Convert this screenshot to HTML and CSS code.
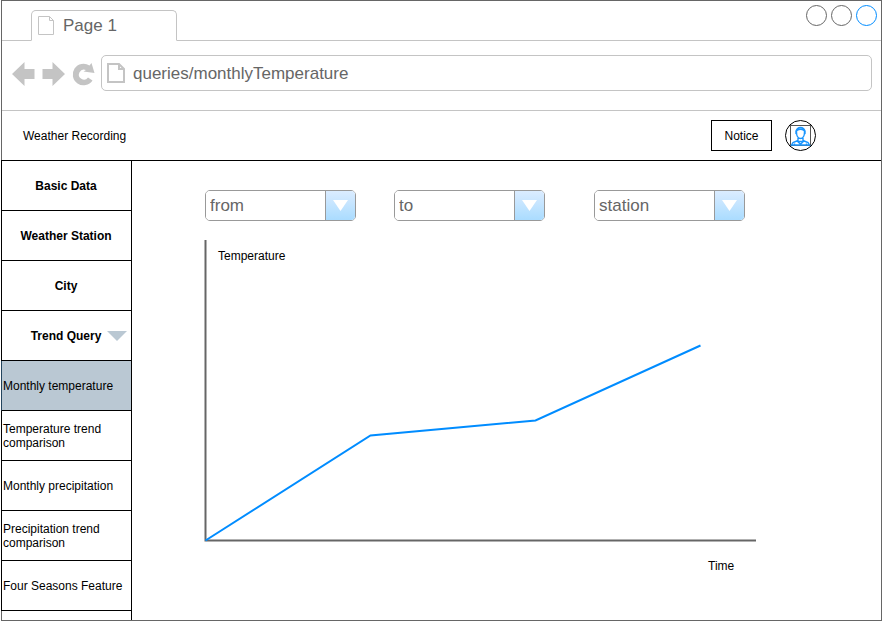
FILE: index.html
```html
<!DOCTYPE html>
<html lang="en">
<head>
<meta charset="utf-8">
<meta name="viewport" content="width=device-width, initial-scale=1">
<title>Weather Recording</title>
<link rel="stylesheet" href="styles.css">
</head>
<body>
<div class="window">
  <div class="tabbar">
    <div class="tab">
      <svg class="tab-icon" width="17" height="20" viewBox="0 0 17 20"><path d="M.5 .5H11.500L15.500 4.500V18.500H.5ZM11.500 .5V4.500H15.500"/></svg>
      <span>Page 1</span>
    </div>
    <div class="dots">
      <span class="dot"></span><span class="dot"></span><span class="dot dot-active"></span>
    </div>
  </div>
  <div class="toolbar">
    <button class="nav" type="button" aria-label="Back"><svg width="23" height="24" viewBox="0 0 23 24"><path d="M0 12L12.500 0V7H22.500V17H12.500V24Z"/></svg></button>
    <button class="nav" type="button" aria-label="Forward"><svg width="23" height="24" viewBox="0 0 23 24"><path d="M23 12L10.500 0V7H.5V17H10.500V24Z"/></svg></button>
    <button class="nav" type="button" aria-label="Reload"><svg class="reload" width="22" height="24" viewBox="0 0 22 24"><path d="M17.500 3.500L19.500 1L22.500 11L11.500 9.500L14 8A5 5 0 1 0 16 15.500L20.500 18.500A10.800 10.800 0 1 1 17.500 3.500Z"/></svg></button>
    <div class="address">
      <svg class="page-icon" width="18" height="20" viewBox="0 0 18 20"><path d="M1 1H12L17 6V19H1ZM12 1V6H17"/></svg>
      <input type="text" aria-label="Address" value="queries/monthlyTemperature">
    </div>
  </div>
  <header class="header">
    <span>Weather Recording</span>
    <div class="header-actions">
      <button class="notice" type="button">Notice</button>
      <button class="avatar" type="button" aria-label="Account">
        <svg width="31" height="31" viewBox="0 0 31 31">
          <circle class="ring" cx="15.500" cy="15.500" r="15"/>
          <rect class="frame" x="5.500" y="5.500" width="20" height="20"/>
          <path class="person" d="M11.500 12C11 6 20 6 19.500 12C19.500 15.500 18 18.500 15.500 18.500S11.500 15.500 11.500 12ZM11 14C9 5.500 22 5.500 20 14M12 10.500C14 9 17 9 19 10.500M13 18V21.500H18V18M13 20.500L8 22.500L6.500 25H24.500L23 22.500L18 20.500M9.500 25V23.500M21.500 25V23.500M13 22L15.500 24L18 22"/>
        </svg>
      </button>
    </div>
  </header>
  <div class="content">
    <nav class="sidebar">
      <a class="item main-item" href="#">Basic Data</a>
      <a class="item main-item" href="#">Weather Station</a>
      <a class="item main-item" href="#">City</a>
      <a class="item main-item" href="#">Trend Query<svg class="caret" width="20" height="10" viewBox="0 0 20 10"><path d="M0 0H20L10 10Z"/></svg></a>
      <a class="item selected" href="#">Monthly temperature</a>
      <a class="item" href="#">Temperature trend comparison</a>
      <a class="item" href="#">Monthly precipitation</a>
      <a class="item" href="#">Precipitation trend comparison</a>
      <a class="item" href="#">Four Seasons Feature</a>
    </nav>
    <main class="main">
      <div class="filters">
        <div class="combo"><select aria-label="From"><option>from</option></select><span class="drop"><svg width="15" height="11" viewBox="0 0 15 11"><path d="M0 0H15L7.500 11Z"/></svg></span></div>
        <div class="combo"><select aria-label="To"><option>to</option></select><span class="drop"><svg width="15" height="11" viewBox="0 0 15 11"><path d="M0 0H15L7.500 11Z"/></svg></span></div>
        <div class="combo"><select aria-label="Station"><option>station</option></select><span class="drop"><svg width="15" height="11" viewBox="0 0 15 11"><path d="M0 0H15L7.500 11Z"/></svg></span></div>
      </div>
      <svg class="chart" viewBox="0 0 551 340" role="img" aria-label="Temperature over time">
        <path class="axis" d="M.5 0V300.500H551"/>
        <polyline class="series" points="0.5,300.5 165.5,195.5 330.5,180.5 495.5,105.5"/>
        <text x="13" y="20">Temperature</text>
        <text x="503" y="330">Time</text>
      </svg>
    </main>
  </div>
</div>
</body>
</html>
```

FILE: styles.css
```css
* { box-sizing: border-box; }

body {
  margin: 0;
  background: #fff;
  color: #000;
  font: 12px/14px "Liberation Sans", Arial, sans-serif;
}

button {
  margin: 0;
  padding: 0;
  border: 0;
  background: none;
  font: inherit;
  color: inherit;
}

svg { display: block; fill: none; }

.window {
  display: flex;
  flex-direction: column;
  height: 100vh;
  margin-left: 1px;
  border: 1px solid #666;
}

.tabbar {
  display: flex;
  flex: none;
  justify-content: space-between;
  height: 40px;
  padding: 9px 4px 0 29px;
  border-bottom: 1px solid #c4c4c4;
}

.tab {
  display: flex;
  align-items: center;
  gap: 8px;
  width: 146px;
  height: 31px;
  padding-left: 6px;
  border: 1px solid #c4c4c4;
  border-bottom-color: #fff;
  border-radius: 5px 5px 0 0;
  background: #fff;
  color: #666;
  font-size: 17px;
  line-height: 20px;
}

.tab-icon { stroke: #c4c4c4; }

.dots {
  display: flex;
  gap: 4px;
  margin-top: -5px;
}

.dot {
  width: 21px;
  height: 21px;
  border: 1px solid #666;
  border-radius: 50%;
}

.dot-active { border-color: #008cff; }

.toolbar {
  display: flex;
  flex: none;
  align-items: center;
  gap: 7px;
  height: 70px;
  padding: 0 9px 6px 10px;
  border-bottom: 1px solid #c4c4c4;
}

.nav { padding-top: 2px; }

.nav svg { fill: #c4c4c4; }

.reload { overflow: visible; }

.address {
  display: flex;
  flex: 1;
  align-items: center;
  gap: 8px;
  height: 36px;
  padding-left: 5px;
  border: 1px solid #c4c4c4;
  border-radius: 5px;
}

.page-icon { stroke: #c4c4c4; stroke-width: 2; }

.address input {
  flex: 1;
  min-width: 0;
  padding: 2px 0 0;
  border: 0;
  outline: 0;
  background: none;
  color: #666;
  font: 17px/20px "Liberation Sans", Arial, sans-serif;
}

.header {
  display: flex;
  flex: none;
  align-items: center;
  justify-content: space-between;
  height: 50px;
  margin-left: -1px;
  padding: 0 65px 0 22px;
  border-bottom: 1px solid #000;
}

.header-actions { display: flex; gap: 13px; }

.notice {
  width: 61px;
  height: 31px;
  border: 1px solid #000;
}

.ring { stroke: #000; }
.frame { stroke: #555; }
.person { stroke: #1a96ff; stroke-width: 1.4; }

.content {
  display: flex;
  flex: 1;
  min-height: 0;
}

.sidebar {
  flex: none;
  width: 131px;
  margin-left: -1px;
  border-right: 1px solid #000;
  overflow: hidden;
}

.item {
  display: flex;
  align-items: center;
  height: 50px;
  padding: 0 1px;
  border-bottom: 1px solid #000;
  border-left: 1px solid #000;
  color: #000;
  text-decoration: none;
}

.main-item {
  position: relative;
  justify-content: center;
  padding-right: 2px;
  font-weight: bold;
}

.caret {
  position: absolute;
  right: 4px;
  fill: #bac8d3;
}

.selected {
  border-left-color: #23445d;
  background: #bac8d3;
}

.main {
  flex: 1;
  min-width: 0;
  padding: 29px 0 0 73px;
}

.filters {
  display: grid;
  grid-template-columns: 189px 200px 151px;
  margin-bottom: 19px;
}

.combo {
  position: relative;
  width: 151px;
  height: 31px;
  border: 1px solid #999;
  border-radius: 5px;
  overflow: hidden;
}

.combo select {
  width: 100%;
  height: 100%;
  padding: 0 30px 0 4px;
  border: 0;
  background: #fff;
  color: #666;
  font: 17px/20px "Liberation Sans", Arial, sans-serif;
  appearance: none;
}

.drop {
  position: absolute;
  inset: 0 0 0 auto;
  display: flex;
  align-items: center;
  justify-content: center;
  width: 30px;
  border-left: 1px solid #999;
  background: linear-gradient(#dbecff, #aadcff);
  pointer-events: none;
}

.drop svg { fill: #fff; }

.chart {
  width: 100%;
  max-width: 551px;
  overflow: visible;
}

.axis { stroke: #666; stroke-width: 2; }
.series { stroke: #008cff; stroke-width: 2; }
.chart text { fill: #000; }
```
